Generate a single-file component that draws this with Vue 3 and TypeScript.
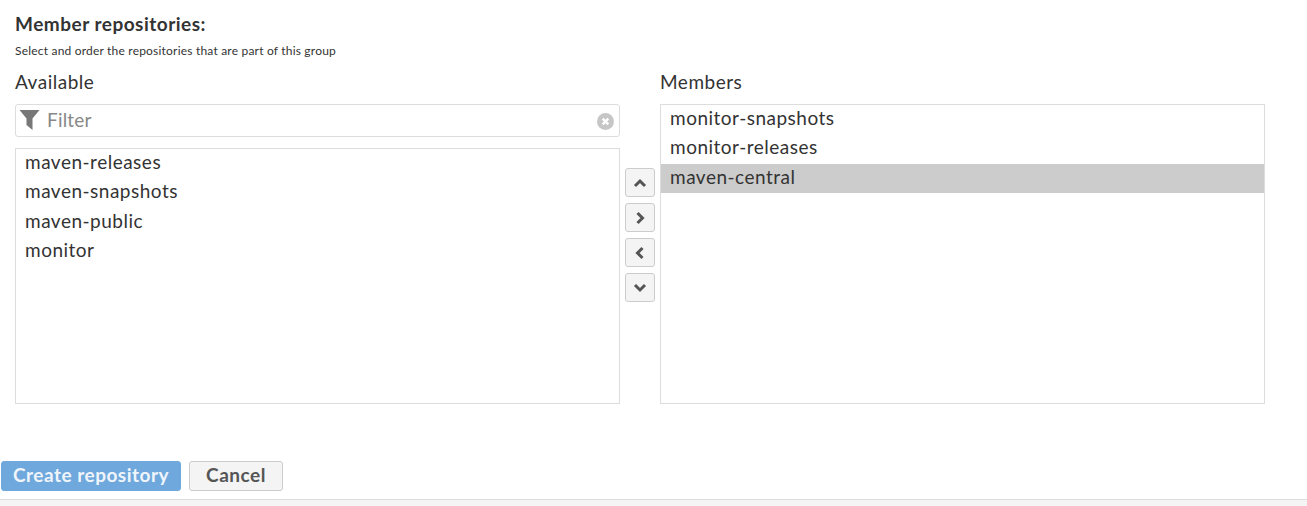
<script setup lang="ts">
const available: string[] = ['maven-releases', 'maven-snapshots', 'maven-public', 'monitor']
const members: string[] = ['monitor-snapshots', 'monitor-releases', 'maven-central']
const selected = 'maven-central'
</script>

<template>
  <div class="page">
    <main class="content">
      <h2 class="title">Member repositories:</h2>
      <p class="sub">Select and order the repositories that are part of this group</p>
      <div class="picker">
        <section class="col">
          <div class="label">Available</div>
          <div class="filter">
            <svg class="funnel" width="21" height="21" viewBox="0 0 21 21"><path d="M0.5 1h20L13.5 9.5V21L7.5 16V9.5z" fill="#777" /></svg>
            <span class="ph">Filter</span>
            <svg class="clear" width="17" height="17" viewBox="0 0 17 17">
              <circle cx="8.5" cy="8.5" r="8.5" fill="#c6c6c6" />
              <path d="M5.7 5.7l5.6 5.6M11.3 5.7l-5.6 5.6" stroke="#fff" stroke-width="2.4" />
            </svg>
          </div>
          <ul class="list avail">
            <li v-for="a in available" :key="a">{{ a }}</li>
          </ul>
        </section>
        <div class="moves">
          <button class="mv"><svg width="14" height="10" viewBox="0 0 14 10"><path d="M2 8l5-5 5 5" /></svg></button>
          <button class="mv"><svg width="10" height="14" viewBox="0 0 10 14"><path d="M2.5 2l5 5-5 5" /></svg></button>
          <button class="mv"><svg width="10" height="14" viewBox="0 0 10 14"><path d="M7.5 2l-5 5 5 5" /></svg></button>
          <button class="mv"><svg width="14" height="10" viewBox="0 0 14 10"><path d="M2 2l5 5 5-5" /></svg></button>
        </div>
        <section class="col">
          <div class="label">Members</div>
          <ul class="list memb">
            <li v-for="m in members" :key="m" :class="{ sel: m === selected }">{{ m }}</li>
          </ul>
        </section>
      </div>
      <div class="actions">
        <button class="primary">Create repository</button>
        <button class="cancel">Cancel</button>
      </div>
    </main>
    <footer class="foot"></footer>
  </div>
</template>

<style>
html, body { margin: 0; background: #fff; }
</style>

<style scoped>
.page {
  width: 1307px;
  height: 506px;
  overflow: hidden;
  display: flex;
  flex-direction: column;
  font-family: Lato, "Liberation Sans", sans-serif;
  color: #333;
  letter-spacing: 0.5px;
}
.content { flex: 1; }
.title { margin: 13px 0 0 15px; font-size: 19px; line-height: 22px; font-weight: 700; color: #333; }
.sub { margin: 9px 0 0 15px; font-size: 12px; line-height: 14px; color: #333; letter-spacing: 0.2px; }
.picker { display: flex; margin: 0 0 0 15px; padding-top: 13px; align-items: flex-start; }
.col { width: 605px; flex: none; }
.label { font-size: 19px; line-height: 22px; height: 22px; margin-bottom: 11px; color: #333; font-weight: 400; }
.filter {
  box-sizing: border-box; height: 33px; border: 1px solid #ddd; border-radius: 3px;
  display: flex; align-items: center; padding: 0 5px 0 3px;
}
.funnel { flex: none; margin-bottom: 3px; }
.clear { flex: none; margin-top: 1px; }
.ph { flex: 1; margin-left: 7px; margin-bottom: 2px; font-size: 19px; color: #888; letter-spacing: 0.2px; }
.list {
  box-sizing: border-box; list-style: none; margin: 0; padding: 0; border: 1px solid #ddd; background: #fff;
  font-size: 19px;
}
.avail { height: 256px; margin-top: 11px; }
.memb { height: 300px; }
.list li { height: 29.33px; line-height: 25.5px; padding-left: 9px; color: #333; }
.list li.sel { background: #ccc; }
.moves { width: 40px; flex: none; display: flex; flex-direction: column; gap: 6px; align-items: center; padding-top: 97px; }
.mv {
  box-sizing: border-box; width: 30px; height: 29px; padding: 0; border: 1px solid #ccc; border-radius: 3px;
  background: #f4f4f4; display: flex; align-items: center; justify-content: center;
}
.mv svg path { fill: none; stroke: #555; stroke-width: 3; }
.actions { display: flex; gap: 8px; margin-top: 57px; padding-left: 1px; }
.actions button { height: 30px; box-sizing: border-box; font-family: inherit; font-size: 19px; letter-spacing: 0.5px; font-weight: 700; border-radius: 3px; padding: 0 0 3px; }
.primary { width: 180px; background: #6fa8dc; border: 1px solid #6fa8dc; color: #f0f5fb; }
.cancel { width: 94px; background: #f4f4f4; border: 1px solid #ccc; color: #555; }
.foot { height: 6px; flex: none; background: #f4f4f4; border-top: 1px solid #ddd; }
</style>
